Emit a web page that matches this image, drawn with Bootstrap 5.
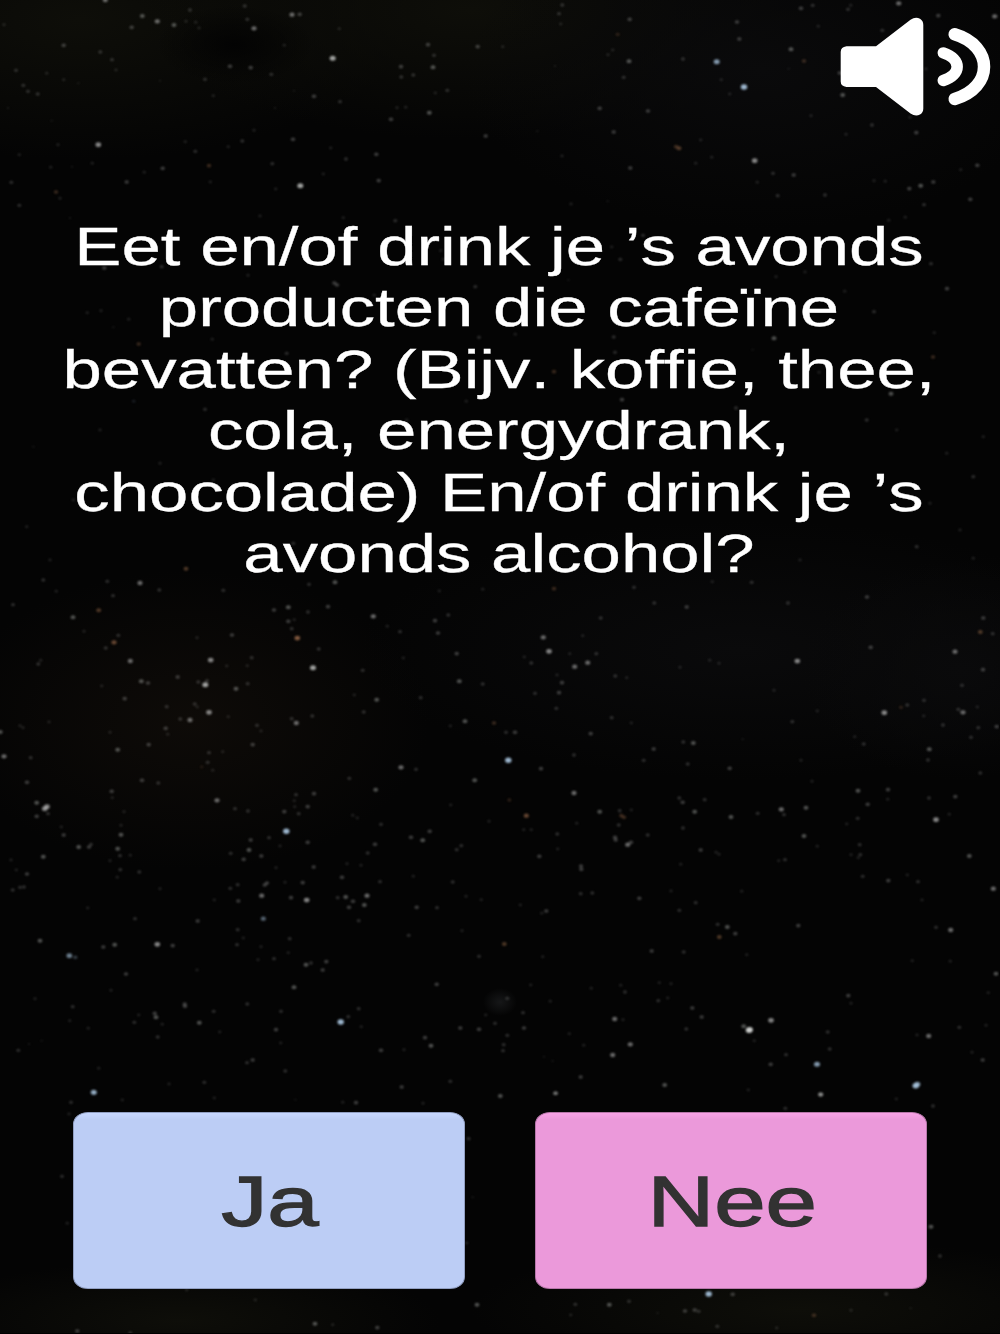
<!DOCTYPE html>
<html lang="nl">
<head>
<meta charset="utf-8">
<meta name="viewport" content="width=device-width, initial-scale=1">
<title>Vragenlijst</title>
<link href="https://cdn.jsdelivr.net/npm/bootstrap@5.3.0/dist/css/bootstrap.min.css" rel="stylesheet">
<style>
body { background: #040404; font-family: "Liberation Sans", Arial, sans-serif; }
.quiz-screen { height: 1334px; padding: 0 73px 45px; }
.quiz-sky { z-index: 0; width: 1000px; height: 1334px; }
.quiz-top { height: 134px; margin-right: -73px; }
.sound-btn { width: 166px; height: 134px; border-radius: 0; z-index: 1; }
.question-text { margin: 82px -49px 0 -51px; font-size: 53.4px; line-height: 61.4px; color: #fff; white-space: nowrap; transform: scaleX(1.325); font-variant-ligatures: none; font-kerning: none; -webkit-text-stroke: .3px #fff; z-index: 1; }
.answer-row { gap: 70px; z-index: 1; }
.answer-btn { height: 177px; border-radius: 15px / 12px; border: 1px solid; color: #323232; font-size: 70px; line-height: 1; padding: 0; }
.answer-btn span { display: inline-block; margin: 2px 0 0 2px; transform: scaleX(1.32); -webkit-text-stroke: 1.3px #323232; }
.answer-yes, .answer-yes:hover { background: linear-gradient(#c8d8ff, #bccdf5 7px); border-color: #919fc2; color: #323232; }
.answer-no, .answer-no:hover { background: linear-gradient(#f9a3e6, #eb99da 7px); border-color: #b777aa; color: #323232; }
</style>
<script src="https://cdn.jsdelivr.net/npm/bootstrap@5.3.0/dist/js/bootstrap.bundle.min.js"></script>
</head>
<body class="m-0 overflow-hidden">
<main class="quiz-screen position-relative d-flex flex-column overflow-hidden">
  <svg class="quiz-sky position-absolute top-0 start-0" viewBox="0 0 1000 1334" aria-hidden="true">
    <defs>
      <radialGradient id="gOlive"><stop offset="0" stop-color="#0e0e09"/><stop offset="1" stop-color="#0e0e09" stop-opacity="0"/></radialGradient>
      <radialGradient id="gGrey"><stop offset="0" stop-color="#0a0a0b"/><stop offset="1" stop-color="#0a0a0b" stop-opacity="0"/></radialGradient>
      <radialGradient id="gBrown"><stop offset="0" stop-color="#0e0b08"/><stop offset="1" stop-color="#0e0b08" stop-opacity="0"/></radialGradient>
      <radialGradient id="gDark"><stop offset="0" stop-color="#030303"/><stop offset="1" stop-color="#030303" stop-opacity="0"/></radialGradient>
      <radialGradient id="gHaze"><stop offset="0" stop-color="#161718"/><stop offset="1" stop-color="#161718" stop-opacity="0"/></radialGradient>
      <filter id="soft" x="0" y="0" width="100%" height="100%"><feGaussianBlur stdDeviation="0.85"/></filter>
    </defs>
    <rect width="1000" height="1334" fill="#040404"/>
    <ellipse cx="80" cy="20" rx="330" ry="140" fill="url(#gOlive)"/>
    <ellipse cx="470" cy="10" rx="330" ry="130" fill="url(#gOlive)"/>
    <ellipse cx="760" cy="70" rx="300" ry="160" fill="url(#gGrey)"/>
    <ellipse cx="235" cy="45" rx="80" ry="40" fill="url(#gDark)"/>
    <ellipse cx="190" cy="720" rx="240" ry="150" fill="url(#gBrown)"/>
    <ellipse cx="740" cy="650" rx="380" ry="130" fill="url(#gGrey)"/>
    <ellipse cx="960" cy="670" rx="160" ry="110" fill="url(#gGrey)"/>
    <ellipse cx="500" cy="1002" rx="17" ry="14" fill="url(#gHaze)"/>
    <ellipse cx="800" cy="1310" rx="330" ry="70" fill="url(#gOlive)"/>
    <ellipse cx="180" cy="1320" rx="260" ry="60" fill="url(#gOlive)"/>
    <g id="stars" filter="url(#soft)"></g>
    <rect y="1333" width="1000" height="1" fill="#000"/>
  </svg>

  <header class="quiz-top d-flex justify-content-end flex-shrink-0">
    <button class="sound-btn btn p-0 border-0 d-flex position-relative" aria-label="Geluid">
      <svg width="166" height="134" viewBox="834 0 166 134">
        <path fill="#fff" d="M846.500 46.200H876L910.500 19.700Q915.500 16.200 920 18.700Q923.300 20.800 923.300 25V108.500Q923.300 112.500 920 114.600Q915.500 117 910.500 113.500L876 87H846.500Q840.700 86 840.700 81.500V52Q840.700 47 846.500 46.200Z"/>
        <path fill="none" stroke="#fff" stroke-width="11.500" stroke-linecap="round" d="M943.300 52.900C961.800 59 961.800 74.500 943.300 80.400"/>
        <path fill="none" stroke="#fff" stroke-width="12.500" stroke-linecap="round" d="M954.700 34.300C993.800 46 993.800 87.500 954.700 99"/>
      </svg>
    </button>
  </header>

  <h1 class="question-text position-relative text-center fw-normal flex-shrink-0">Eet en/of drink je ’s avonds<br>producten die cafeïne<br>bevatten? (Bijv. koffie, thee,<br>cola, energydrank,<br>chocolade) En/of drink je ’s<br>avonds alcohol?</h1>

  <div class="answer-row position-relative d-flex mt-auto">
    <button class="answer-btn answer-yes btn flex-fill w-50"><span>Ja</span></button>
    <button class="answer-btn answer-no btn flex-fill w-50"><span>Nee</span></button>
  </div>
</main>
<script>
// Star chart tiles: origin, then x,y (thirds of a pixel), brightness 1-9 and an optional tint (b blue, o orange)
const tiles = [
[0,0,"316,0,6 427,48,5 472,64,6 522,75,5 395,82,4 570,30,3 558,64,2 587,67,2 597,84,2 734,18,3 742,58,3 762,85,6 876,44,6 899,43,4 12,74,2 191,136,4 301,156,3 336,179,3 348,210,2 48,211,3 70,256,3 84,274,3 113,282,3 140,220,2 191,239,2 235,250,1 480,242,1 615,238,3 690,199,4 752,203,4 814,223,3 853,136,2 998,175,8 1018,86,2 1284,134,4 1302,166,3 1433,140,4 1299,202,5 1203,200,4 1204,231,3 1240,225,3 1342,271,3 1306,279,2 942,289,4 1020,305,3 1191,323,2 1217,322,2 1288,338,5 1173,358,4 1457,408,4 295,434,7 174,434,2 58,464,2 155,362,1 24,324,1 277,490,2 152,502,2 216,500,1 433,517,2 488,505,4 627,497,4o 586,454,3 556,425,2 727,423,3 685,440,2 762,391,2 879,418,4 992,444,2 1038,477,3 1129,463,4 1136,542,4 970,522,2 817,491,3 901,557,8 827,567,2 168,576,4o 180,595,2 380,546,4 34,547,3 58,616,3 631,546,2 640,287,2 825,324,1 882,272,1"],
[500,0,"187,15,3 177,41,3 182,72,2 389,58,4 353,103,3o 338,150,2 324,164,2 387,184,5 371,232,3 549,177,3 711,66,4 718,117,4 650,185,8b 732,261,9b 664,239,2 689,282,2 903,25,4 938,16,3 955,79,2 873,148,5 912,183,4o 866,206,1 1044,28,3 1052,16,2 1196,10,6 1315,47,4 1484,49,6 1147,91,3 1028,285,5 1019,219,4 1278,207,2 1230,352,2 1116,375,3 1249,398,4 933,347,2 1038,403,2 299,325,4 444,333,4 341,396,4 602,420,2 528,440,4o 537,445,5o 587,490,2 635,472,2 391,504,4 186,468,2 764,482,7 819,520,3 881,525,4 772,547,2 833,587,3 975,585,3 1122,542,2 1156,544,2 1228,566,4 1262,557,5 1300,546,4 1432,496,4 1382,509,2 1411,598,4 1272,614,3 323,604,1 213,612,2 112,394,1 8,140,2 165,198,1"],
[50,210,"163,174,4 335,170,3 594,196,2 853,219,4 861,225,4 1036,32,3 880,23,2 1172,122,2 1180,148,2 1276,230,3 1287,382,3 112,308,2 153,302,2 236,328,2 266,402,4o 251,574,2b 710,430,3 487,388,2 973,256,2 1249,574,2 630,18,2 60,24,1 190,352,1 465,598,3"],
[500,210,"429,76,3 335,111,2 361,148,3 915,186,2 828,200,2 1166,31,2 1216,22,2 1293,161,3 1341,236,4 1034,244,2 1122,305,3 822,385,5 1299,441,4o 341,381,3 345,427,3 46,373,2 162,485,4o 366,569,4 708,594,3 1173,551,5 957,487,2 1303,368,2 758,419,1 205,210,1"],
[0,580,"130,0,3 322,4,3 420,9,6 478,30,3 339,47,3 169,34,2 39,74,3 296,91,5o 219,112,5 252,154,2 355,166,3 342,187,6o 317,204,3 391,243,6 115,252,3 122,241,2 670,31,3 591,173,2 696,165,4 632,240,7 680,258,2 755,233,3 742,257,2 424,304,5 444,309,4 533,291,4 595,306,3 621,302,3 616,314,8 708,326,5 743,311,3 374,356,4 305,318,2 500,380,3 584,372,3 592,381,2 627,397,7 570,420,6 541,417,3 685,410,2 497,445,4 503,463,2 446,494,4 353,509,5 330,457,2 147,426,2 60,437,2 69,443,2 1,456,5 12,529,6 92,533,3 81,607,4 110,668,5 134,686,7 141,680,7 110,709,4 144,701,3 335,634,4 337,653,2 426,601,4 475,609,3 184,741,2 191,765,4 363,764,5 363,736,2 372,695,2 627,518,3 668,515,2 623,547,3 605,561,2o 638,571,2 758,494,4 771,436,3 783,453,2 651,661,6 705,686,3 744,693,3 853,695,4 896,701,3 884,680,2 923,680,4 888,644,3 942,641,4 883,662,2 859,754,9b 807,773,3 865,82,5 822,90,4 924,96,3 984,80,4 1005,7,5 927,13,3 865,124,4 883,119,2 875,146,3 892,174,7o 956,207,3 939,263,8 875,416,3 889,429,6 937,408,3 1120,109,6 1162,139,2 1200,155,3 1305,122,4 1345,105,3 1314,159,4 1370,221,4 1210,234,2 1088,271,3 1378,304,5 1448,312,3 1262,353,3 1130,359,5 1063,345,2 1091,396,3 1395,424,5 1351,438,2 1482,429,4o 1203,562,6 1248,568,3 1424,601,5 1127,629,5 1048,595,3 1352,675,2 1058,706,2 1072,714,2 1143,733,3 1233,772,4 1289,754,4 1467,724,2 1448,28,2 1318,33,2"],
[500,580,"162,26,4o 402,22,3 463,69,3 560,81,4 637,5,2 755,7,3 864,69,3 1101,51,4 302,114,3 248,167,2 130,172,6 147,214,7 94,249,3 73,231,2 224,260,6 263,248,6 289,221,3 209,221,2 186,308,4 177,338,4 105,340,3 169,385,3 346,288,3 380,293,2 171,285,2 335,413,3 272,461,4 394,429,2 540,262,2 657,250,2 629,241,2 892,243,7 1112,202,4 1365,215,6 1450,114,4 1441,156,5o 1478,161,3 1449,269,4 1386,316,3 1153,398,7 1203,382,3o 1222,375,3 1272,361,3 1271,408,2 1389,397,6 1375,388,3 1432,381,2 1329,435,3 1435,443,3 1413,472,3 1490,440,4 877,425,3 952,393,2 822,331,2 1064,470,2 1091,492,3 1288,508,5 1284,540,3 18,457,3 45,457,4 25,541,9b 123,566,4 222,525,3 222,639,6 461,507,4 431,541,3 550,486,3 580,489,5 563,552,3 689,565,4 728,478,1 903,541,2 936,604,2 79,707,6o 28,660,3o 299,695,5 359,692,3 364,707,4o 372,712,4o 356,735,3 394,690,2 230,730,2 94,749,2 71,749,2 172,762,3 345,772,4 443,765,3 549,744,3 538,654,3 548,667,4 614,659,3 584,695,5 693,711,5 773,700,3 844,688,6 852,704,3 918,683,5 912,768,5 1074,632,5 1103,673,4 1164,629,4 1163,658,2 1073,715,3 1040,732,2 1287,654,3 1366,650,4 1308,719,7 1348,703,2 1441,579,3"],
[0,840,"236,21,5 267,21,4 273,13,3 130,50,5 353,26,5 360,47,3 391,46,2 330,62,2 361,89,3 352,112,2 418,96,3 33,60,2 49,90,2 81,102,4 38,150,3 60,142,3 72,141,3 480,146,2 263,204,2 405,236,3 593,243,4 120,302,5 310,321,4 344,314,5 472,313,7 518,317,4 208,347,7b 226,352,4b 378,402,4 591,390,2 333,451,2 105,476,2 218,500,3 209,542,2 265,565,2 403,547,3 416,525,2 464,520,4 468,532,5 487,553,2 554,492,4 555,499,4 598,548,5 641,514,3 473,591,3 55,631,3 125,602,1 87,612,1 296,685,2 281,757,8b 507,732,2 613,727,3 692,40,3 731,58,4 747,30,5 784,48,4 752,0,4 840,18,2 923,7,4 828,83,2 941,81,4 713,134,3 691,145,3 794,135,4 801,129,4 908,128,4 855,127,2 785,167,6 715,183,4 643,180,2 873,173,4 920,180,7 790,236,6b 713,269,3 730,294,2 711,314,3 783,320,2 869,296,3 822,356,3 774,359,2 865,338,2 918,374,5 933,369,3 979,365,4 968,390,4 882,442,5 742,492,3 843,514,3 828,569,4 659,576,2 842,609,2 758,660,4 741,668,3 856,693,3 1026,112,4 1083,76,2 1125,13,4 1103,39,3 1140,125,3 1041,71,2 1037,171,5 1013,173,3 1101,167,6 1093,195,5 1059,184,4 1047,202,4 1076,242,3 1250,202,4 1311,203,3 1226,286,3 1384,17,3 1370,29,3 1358,126,3 1240,109,2 1398,169,2 1444,179,2 1386,272,2 1310,433,4 1437,349,3 1022,546,9b 1045,530,3 1076,506,3 1084,560,2 1275,593,4 1293,617,5 1143,631,4 1212,629,2 1205,741,4 1351,724,3 1381,564,4 1437,568,4 1485,550,3 1457,525,2 1268,1,5"],
[500,840,"383,14,6 393,7,4 347,0,4 118,49,4 173,27,2 243,78,4 244,88,4 602,30,4 648,37,2 657,43,2 542,73,2 242,161,3 277,159,3 418,175,4 513,153,2 61,195,2 139,213,4 125,220,2 538,211,3 587,188,3 725,154,2 682,261,5 653,253,3 706,281,4 658,291,5o 13,312,5o 128,350,2 455,333,4 551,336,3 740,344,2 895,257,4 855,59,3 836,62,2 952,19,2 1079,14,3 1081,44,3 1053,44,2 1075,53,2 1088,109,3 1165,122,4 1254,125,3 1222,105,2 1408,48,5 1480,146,6 1266,180,2 1308,262,3 1352,270,6 1237,362,2 1351,364,2 1488,401,5 1465,458,2 22,475,3 92,435,2 151,484,2 69,518,3 72,564,4 22,586,3 11,614,3 9,632,3 362,436,2 375,456,3 274,445,2 478,428,2 513,431,2 475,482,3 503,474,2 577,504,4 605,531,4 344,537,6 369,539,2 559,567,3 391,613,6 338,645,6 251,616,2 208,581,2 242,711,4 167,760,5 1,768,5 132,650,1 158,663,1 494,735,5 749,569,9 747,571,9 731,559,5 813,541,7 763,602,2 858,644,3 812,673,4 951,673,8b 962,763,6 983,576,3 989,627,3 1045,467,4 1053,490,2 1251,585,2 1286,588,6 1247,737,9b 1252,733,8b 1378,562,3 1458,556,2 1416,637,2 1448,660,4 745,750,2"],
[60,1090,"102,8,6b 33,37,3 187,30,2 463,24,2 888,38,4 1089,40,2 706,29,1 848,37,2 6,259,3 22,400,2 27,72,2 1226,146,3 586,630,2 380,600,2 765,701,5 818,704,2 952,713,4 1251,644,5 211,729,3 52,723,4 1220,459,2 1238,322,1"],
[520,1090,"106,10,4 902,14,5 796,55,3 1129,27,2 1239,48,3 1233,410,5 566,612,9b 638,613,4 1099,612,3 166,643,3 268,644,5 327,634,3 495,663,4 524,660,4 536,664,3 152,675,2 592,709,3 882,676,4o 993,661,2 770,714,2 413,669,1 1172,655,1 1260,498,3"],
[0,400,"300,90,2 1220,60,2 480,190,2 100,140,1 640,240,2 80,380,2 150,480,2 558,506,5o 700,255,2 880,430,3 1400,90,2 220,300,2"],
[500,400,"1190,90,2 1340,160,2 1420,230,3 1100,60,3 1420,475,2 1250,440,3 900,480,2 400,250,2 1380,390,2 120,480,2 1290,310,2 1450,110,2"]
];
let out = "";
for (const [ox, oy, list] of tiles)
  for (const item of list.split(" ")) {
    const p = item.split(","), m = parseInt(p[2]), tint = p[2].slice(1);
    const fill = tint === "b" ? "#a9c6e0" : tint === "o" ? "#c98a60" : "#cfd0cf";
    const r = 1.15 + m * 0.17;
    out += `<ellipse cx="${(ox + p[0] / 3).toFixed(1)}" cy="${(oy + p[1] / 3).toFixed(1)}" rx="${(r * 1.2).toFixed(2)}" ry="${r.toFixed(2)}" fill="${fill}" opacity="${(0.03 + m * m * 0.0065 + m * 0.04).toFixed(2)}"/>`;
  }
document.getElementById("stars").innerHTML = out;
</script>
</body>
</html>
